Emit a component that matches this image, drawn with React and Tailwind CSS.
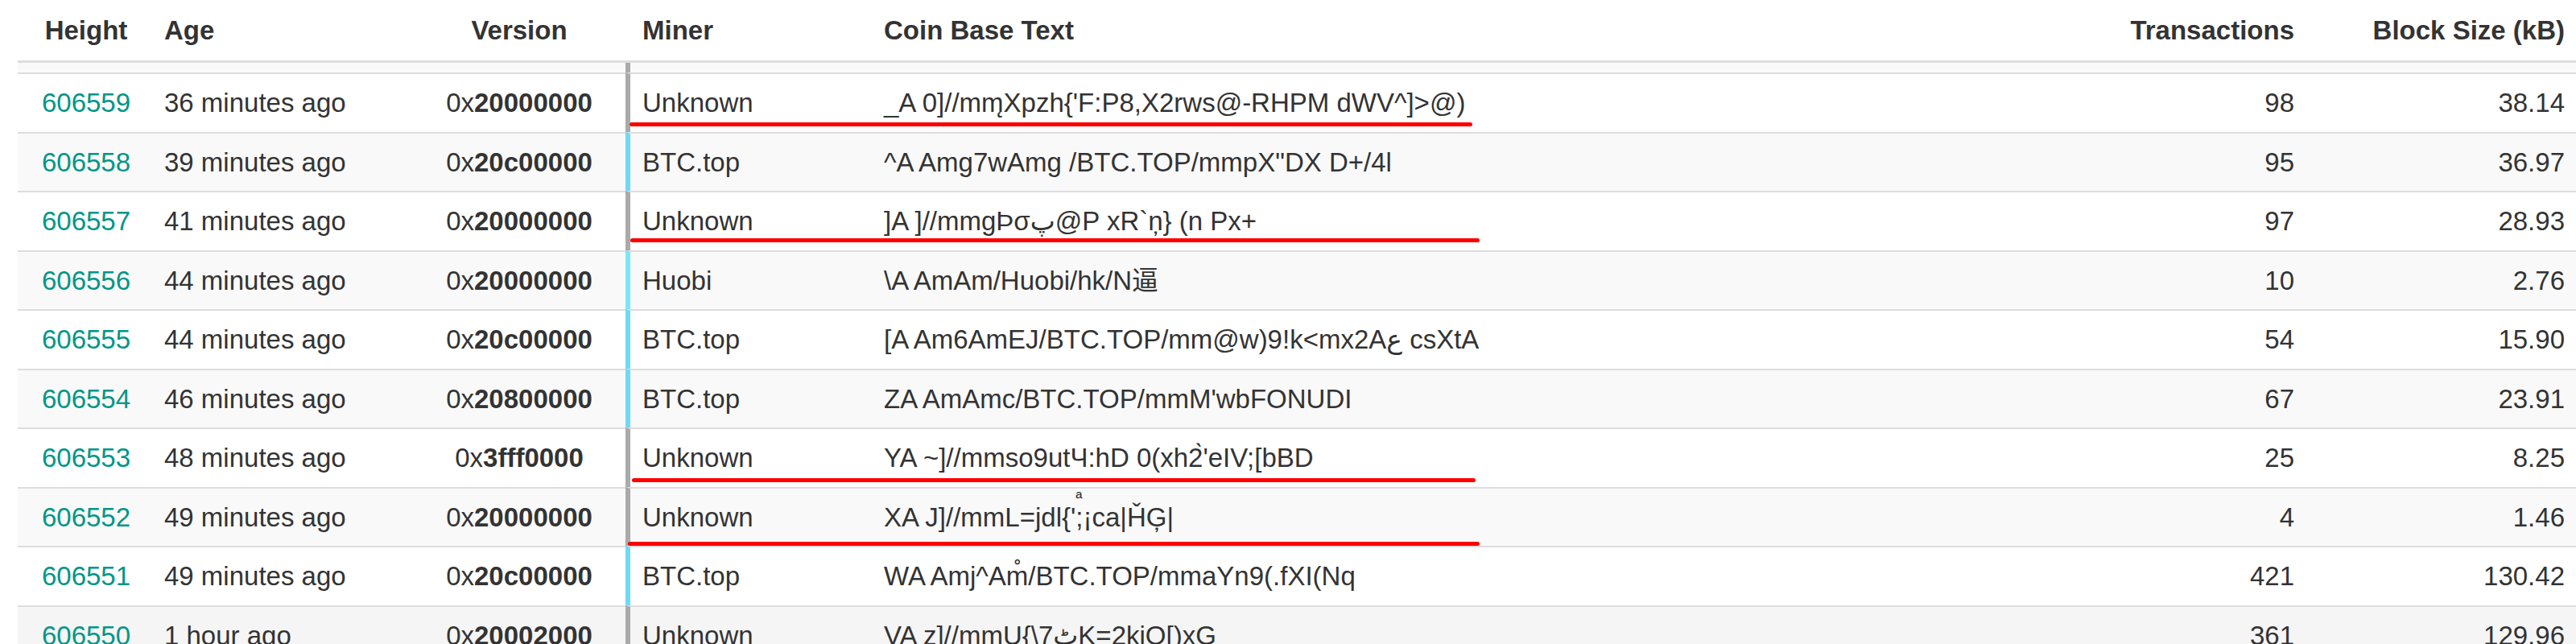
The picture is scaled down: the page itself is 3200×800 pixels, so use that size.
import React from 'react';

const COLS = 'grid grid-cols-[170px_321px_264px_309px_1fr_250px_338px]';

const barColor = {
  Unknown: 'border-l-[#aaaaaa]',
  'BTC.top': 'border-l-[#6fd9f6]',
  Huobi: 'border-l-[#7ce6f8]',
};

const blocks = [
  { height: 606559, age: '36 minutes ago', ver: '20000000', miner: 'Unknown', text: "_A 0]//mm\u0328Xpzh{'F:P8,X2rws@-RHPM dWV^]>@)", tx: 98, size: '38.14' },
  { height: 606558, age: '39 minutes ago', ver: '20c00000', miner: 'BTC.top', text: '^A Amg7wAmg /BTC.TOP/mmpX"DX D+/4l', tx: 95, size: '36.97' },
  { height: 606557, age: '41 minutes ago', ver: '20000000', miner: 'Unknown', text: ']A ]//mmg\u00DE\u03C3\u067E@P xR`\u0146} (n Px+', tx: 97, size: '28.93' },
  { height: 606556, age: '44 minutes ago', ver: '20000000', miner: 'Huobi', text: '\\A AmAm/Huobi/hk/N\u903C', tx: 10, size: '2.76' },
  { height: 606555, age: '44 minutes ago', ver: '20c00000', miner: 'BTC.top', text: '[A Am6AmEJ/BTC.TOP/mm@w)9!k<mx2A\u0639 csXtA', tx: 54, size: '15.90' },
  { height: 606554, age: '46 minutes ago', ver: '20800000', miner: 'BTC.top', text: "ZA AmAmc/BTC.TOP/mmM'wbFONUDI", tx: 67, size: '23.91' },
  { height: 606553, age: '48 minutes ago', ver: '3fff0000', miner: 'Unknown', text: "YA ~]//mmso9ut\u0427:hD 0(xh2\u0300'eIV;[bBD", tx: 25, size: '8.25' },
  {
    height: 606552, age: '49 minutes ago', ver: '20000000', miner: 'Unknown', tx: 4, size: '1.46',
    text: (
      <>
        {"XA J]//mmL=jdl{' "}
        <span className="relative">
          ;<span className="absolute -top-[16px] left-0 text-[22px]">{'\u00AA'}</span>
        </span>
        {'\u00A1ca|\u021EG\u0327|'}
      </>
    ),
  },
  { height: 606551, age: '49 minutes ago', ver: '20c00000', miner: 'BTC.top', text: 'WA Amj^Am\u030A/BTC.TOP/mmaYn9(.fXI(Nq', tx: 421, size: '130.42' },
  { height: 606550, age: '1 hour ago', ver: '20002000', miner: 'Unknown', text: 'VA z]//mmU{\\7\u0679K=2kiO[)xG', tx: 361, size: '129.96' },
];

// red marker strokes drawn over the screenshot
const marks = [
  'left-[782px] top-[152px] w-[1047px]',
  'left-[783px] top-[296px] w-[1055px]',
  'left-[785px] top-[594px] w-[1048px]',
  'left-[780px] top-[673px] w-[1058px]',
];

const cell = 'flex items-center border-t-2 border-t-[#dddddd]';

const Row = ({ b, bg }) => (
  <div className={`${COLS} h-[73.5px] ${bg}`}>
    <div className={`${cell} justify-center text-[#009688]`}>{b.height}</div>
    <div className={`${cell} pl-3`}>{b.age}</div>
    <div className={`${cell} justify-center`}>
      0x<b className="font-bold">{b.ver}</b>
    </div>
    <div className={`${cell} border-l-[6px] pl-[15px] ${barColor[b.miner]}`}>{b.miner}</div>
    <div className={`${cell} pl-3 whitespace-nowrap`}>{b.text}</div>
    <div className={`${cell} justify-end pr-3`}>{b.tx}</div>
    <div className={`${cell} justify-end pr-[14px]`}>{b.size}</div>
  </div>
);

export default function App() {
  return (
    <div className="relative w-[3200px] h-[800px] overflow-hidden bg-white pl-[22px] text-[33px] text-[#333333] font-['Liberation_Sans','DejaVu_Sans','Noto_Sans_CJK_SC',sans-serif]">
      <div className={`${COLS} h-[78px] border-b-[3px] border-[#dddddd] font-bold`}>
        <div className="flex items-center justify-center">Height</div>
        <div className="flex items-center pl-3">Age</div>
        <div className="flex items-center justify-center">Version</div>
        <div className="flex items-center pl-[21px]">Miner</div>
        <div className="flex items-center pl-3">Coin Base Text</div>
        <div className="flex items-center justify-end pr-3">Transactions</div>
        <div className="flex items-center justify-end pr-[14px]">Block Size (kB)</div>
      </div>

      <div className={`${COLS} h-[12px] bg-[#f9f9f9]`}>
        <div />
        <div />
        <div />
        <div className="border-l-[6px] border-l-[#aaaaaa]" />
        <div />
        <div />
        <div />
      </div>

      {blocks.map((b, i) => (
        <Row
          key={b.height}
          b={b}
          bg={i === blocks.length - 1 ? 'bg-[#f5f5f5]' : i % 2 === 1 ? 'bg-[#f9f9f9]' : 'bg-white'}
        />
      ))}

      {marks.map((m, i) => (
        <div key={i} className={`absolute z-10 h-[5px] rounded-full bg-[#ff0000] ${m}`} />
      ))}
    </div>
  );
}
